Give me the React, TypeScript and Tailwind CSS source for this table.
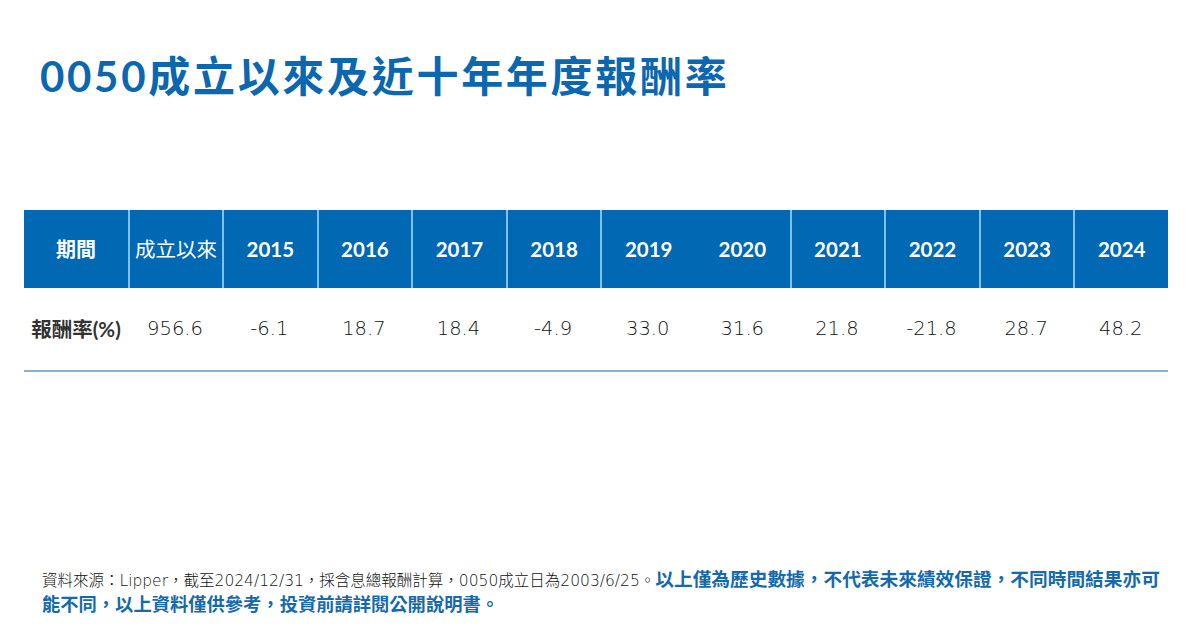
const years = ['2015', '2016', '2017', '2018', '2019', '2020', '2021', '2022', '2023', '2024']
const values = ['956.6', '-6.1', '18.7', '18.4', '-4.9', '33.0', '31.6', '21.8', '-21.8', '28.7', '48.2']

const cjk = { fontFamily: '"Lato", "Noto Sans CJK TC", sans-serif' }
const thin = { fontFamily: '"DejaVu Sans", "Noto Sans CJK TC", sans-serif' }

export default function App() {
  return (
    <div className="w-[1200px] h-[628px] bg-white flex flex-col overflow-hidden" style={cjk}>
      {/* Title */}
      <h1 className="mt-[55px] ml-[40px] text-[42px] leading-none font-bold text-[#0c67ae] tracking-[2.7px]">
        0050成立以來及近十年年度報酬率
      </h1>

      {/* Table */}
      <div className="mt-[113px] mx-[24px] w-[1144px]">
        <div className="grid grid-cols-[104px_94px_repeat(10,1fr)] h-[78px] bg-[#0168b3] text-white">
          <div className="flex items-center justify-center text-[20px] font-bold">期間</div>
          <div className="flex items-center justify-center text-[20.5px] border-l-2 border-[#7ec0ee]">成立以來</div>
          {years.map((y) => (
            <div
              key={y}
              className={`flex items-center justify-center text-[20.5px] font-bold ${y === '2020' ? '' : 'border-l-2 border-[#7ec0ee]'}`}
            >
              {y}
            </div>
          ))}
        </div>
        <div className="grid grid-cols-[104px_94px_repeat(10,1fr)] h-[84px] border-b-2 border-[#8eafcc] text-[#111]">
          <div className="flex items-center justify-center text-[20.5px] font-bold text-[#333]">報酬率(%)</div>
          {values.map((v, i) => (
            <div key={i} className="flex items-center justify-center text-[19.5px] font-extralight" style={thin}>
              {v}
            </div>
          ))}
        </div>
      </div>

      {/* Footnote */}
      <div className="mt-[196px] ml-[42px] leading-[23px]">
        <div className="whitespace-nowrap">
          <span className="text-[15.5px] text-[#111] font-extralight" style={thin}>
            資料來源：Lipper，截至2024/12/31，採含息總報酬計算，0050成立日為2003/6/25。
          </span>
          <span className="text-[18.7px] font-bold text-[#176aa9]">以上僅為歷史數據，不代表未來績效保證，不同時間結果亦可</span>
        </div>
        <div className="whitespace-nowrap text-[18.3px] font-bold text-[#176aa9]">
          能不同，以上資料僅供參考，投資前請詳閱公開說明書。
        </div>
      </div>
    </div>
  )
}
